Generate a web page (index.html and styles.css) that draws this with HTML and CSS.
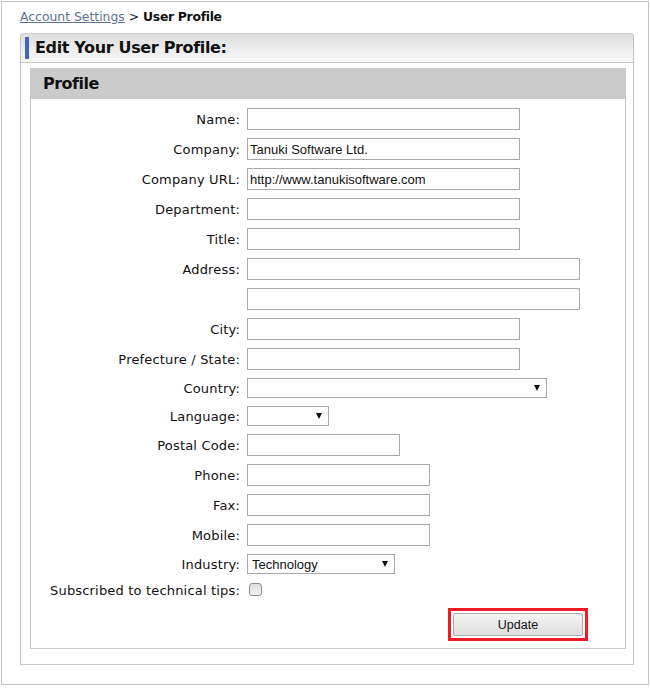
FILE: index.html
```html
<!DOCTYPE html>
<html>

<head>
    <title>User Profile</title>
    <link rel="stylesheet" href="styles.css">
</head>

<body>
    <div class="page">
        <div class="crumbs">
            <a href="#">Account Settings</a> &gt; <b>User Profile</b>
        </div>

        <div class="panel">
            <div class="panel-head">
                <h1>Edit Your User Profile:</h1>
            </div>
            <div class="panel-body">
                <div class="box">
                    <h2>Profile</h2>
                    <form class="form">
                        <label for="name">Name:</label>
                        <input type="text" id="name" class="w-md">

                        <label for="company">Company:</label>
                        <input type="text" id="company" class="w-md" value="Tanuki Software Ltd.">

                        <label for="url">Company URL:</label>
                        <input type="text" id="url" class="w-md" value="http://www.tanukisoftware.com">

                        <label for="dept">Department:</label>
                        <input type="text" id="dept" class="w-md">

                        <label for="title">Title:</label>
                        <input type="text" id="title" class="w-md">

                        <label for="addr1">Address:</label>
                        <input type="text" id="addr1" class="w-lg">

                        <span></span>
                        <input type="text" id="addr2" class="w-lg">

                        <label for="city">City:</label>
                        <input type="text" id="city" class="w-md">

                        <label for="state">Prefecture / State:</label>
                        <input type="text" id="state" class="w-md">

                        <label for="country">Country:</label>
                        <span class="select w-country"><select id="country">
                                <option></option>
                            </select></span>

                        <label for="lang">Language:</label>
                        <span class="select w-lang"><select id="lang">
                                <option></option>
                            </select></span>

                        <label for="postal">Postal Code:</label>
                        <input type="text" id="postal" class="w-sm">

                        <label for="phone">Phone:</label>
                        <input type="text" id="phone" class="w-ph">

                        <label for="fax">Fax:</label>
                        <input type="text" id="fax" class="w-ph">

                        <label for="mobile">Mobile:</label>
                        <input type="text" id="mobile" class="w-ph">

                        <label for="industry">Industry:</label>
                        <span class="select w-ind"><select id="industry">
                                <option>Technology</option>
                            </select></span>

                        <label for="tips" class="tips-label">Subscribed to technical tips:</label>
                        <span class="tips"><input type="checkbox" id="tips"></span>

                        <div class="actions">
                            <span class="highlight"><button type="button" class="btn">Update</button></span>
                        </div>
                    </form>
                </div>
            </div>
        </div>
    </div>
</body>

</html>
```

FILE: styles.css
```css
html,
body {
    margin: 0;
    padding: 0;
    background: #fff;
}

body {
    font-family: "DejaVu Sans", Verdana, sans-serif;
    font-size: 13px;
    color: #111;
}

.page {
    box-sizing: border-box;
    width: 648px;
    height: 684px;
    margin: 1px;
    border: 1px solid #c4c4c4;
    padding: 7px 14px 0 18px;
}

.crumbs {
    font-size: 12.4px;
    line-height: 16px;
    margin-bottom: 8px;
    color: #111;
}

.crumbs a {
    color: #5b7391;
    text-decoration: underline;
}

.crumbs b {
    letter-spacing: -0.3px;
}

.panel {
    border: 1px solid #c6c6c6;
    border-top: 0;
    border-radius: 4px 4px 0 0;
}

.panel-head {
    height: 28px;
    padding-left: 4px;
    border-top: 1px solid #cfcfcf;
    border-bottom: 1px solid #c6c6c6;
    border-radius: 4px 4px 0 0;
    margin: 0 -1px;
    border-left: 1px solid #c6c6c6;
    border-right: 1px solid #c6c6c6;
    background: linear-gradient(#dedede, #f8f8f8);
}

.panel-head h1 {
    margin: 3px 0 0;
    height: 22px;
    line-height: 22px;
    border-left: 4px solid #4467b1;
    padding-left: 6px;
    font-size: 16px;
    letter-spacing: -0.35px;
    font-weight: bold;
    color: #111;
}

.panel-body {
    padding: 5px 7px 15px 9px;
}

.box {
    border: 1px solid #c8c8c8;
    border-top: 0;
    padding-bottom: 7px;
}

.box h2 {
    margin: 0 -1px;
    height: 31px;
    line-height: 31px;
    padding-left: 13px;
    background: #cbcbcb;
    font-size: 16px;
    letter-spacing: -0.5px;
    color: #111;
}

.form {
    display: grid;
    grid-template-columns: 209px 341px;
    column-gap: 7px;
    row-gap: 8px;
    align-items: center;
    margin-top: 9px;
}

.form label {
    text-align: right;
    white-space: nowrap;
    letter-spacing: 0.18px;
}

.form input[type="text"] {
    box-sizing: border-box;
    height: 22px;
    margin: 0;
    padding: 0 2px;
    border: 1px solid #a9a9a9;
    font-family: "Liberation Sans", Arial, sans-serif;
    font-size: 13px;
    color: #111;
    outline: none;
}

.w-md {
    width: 273px;
}

.w-lg {
    width: 333px;
}

.w-sm {
    width: 153px;
}

.w-ph {
    width: 183px;
}

.select {
    position: relative;
    display: block;
    height: 20px;
}

.select select {
    appearance: none;
    -webkit-appearance: none;
    box-sizing: border-box;
    width: 100%;
    height: 20px;
    margin: 0;
    padding: 0 18px 0 4px;
    border: 1px solid #a9a9a9;
    border-radius: 0;
    background: #fff;
    font-family: "Liberation Sans", Arial, sans-serif;
    font-size: 13px;
    color: #111;
}

.select::after {
    content: "";
    position: absolute;
    right: 7px;
    top: 7px;
    border-left: 3.5px solid transparent;
    border-right: 3.5px solid transparent;
    border-top: 6px solid #111;
    pointer-events: none;
}

.w-country {
    width: 300px;
}

.w-lang {
    width: 82px;
}

.w-ind {
    width: 148px;
}

.tips-label {
    line-height: 18px;
}

.tips {
    height: 18px;
}

.tips input {
    appearance: none;
    -webkit-appearance: none;
    box-sizing: border-box;
    display: block;
    width: 13px;
    height: 13px;
    margin: 1px 0 0 2px;
    border: 1px solid #8e8e8e;
    border-radius: 3px;
    background: linear-gradient(#dcdcdc, #f3f3f3);
}

.actions {
    grid-column: 1 / 3;
    display: flex;
    justify-content: flex-end;
}

.highlight {
    display: block;
    padding: 2px;
    border: 3px solid #ed1c24;
}

.btn {
    box-sizing: border-box;
    display: block;
    width: 130px;
    height: 23px;
    margin: 0;
    padding: 0;
    border: 1px solid #acacac;
    border-radius: 2px;
    background: linear-gradient(#f4f4f4, #dedede);
    font-family: "Liberation Sans", Arial, sans-serif;
    font-size: 12.5px;
    color: #111;
    cursor: pointer;
}
```
